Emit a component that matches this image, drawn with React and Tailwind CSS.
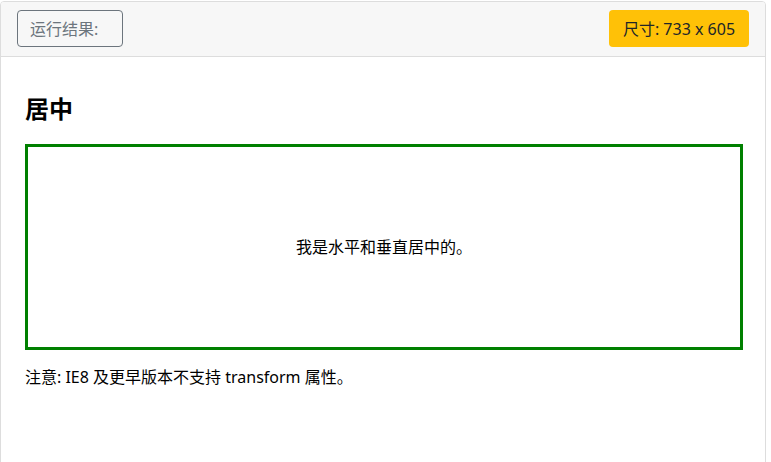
export default function App() {
  const font = { fontFamily: '"Segoe UI", "Noto Sans", "Noto Sans CJK SC", sans-serif' };

  return (
    <div className="w-[771px] h-[462px] bg-white overflow-hidden pt-px" style={font}>
      <div className="w-[766px] h-[480px] border border-[#dddddd] rounded-[4px] overflow-hidden">
        {/* header */}
        <div className="h-[55px] bg-[#f7f7f7] border-b border-[#dddddd] flex items-start justify-between pl-4 pr-4 pt-2">
          <button className="w-[106px] h-[37px] pl-3 text-left border border-[#6c757d] rounded-[4px] text-[16px] text-[#6c757d] leading-none">
            运行结果:
          </button>
          <span className="w-[140px] h-[37px] rounded-[4px] bg-[#ffc107] text-[16px] text-[#212529] flex items-center justify-center">
            尺寸: 733 x 605
          </span>
        </div>

        {/* body */}
        <div className="pl-6 pr-[22px] pt-[34px]">
          <h2 className="text-[24px] font-bold leading-[36px] text-black">居中</h2>
          <div className="mt-[17px] h-[206px] border-[3px] border-[#008000] flex items-center justify-center">
            <p className="text-[16px] text-black">我是水平和垂直居中的。</p>
          </div>
          <p className="mt-[15px] text-[16px] leading-[24px] text-black">
            注意: IE8 及更早版本不支持 transform 属性。
          </p>
        </div>
      </div>
    </div>
  );
}
